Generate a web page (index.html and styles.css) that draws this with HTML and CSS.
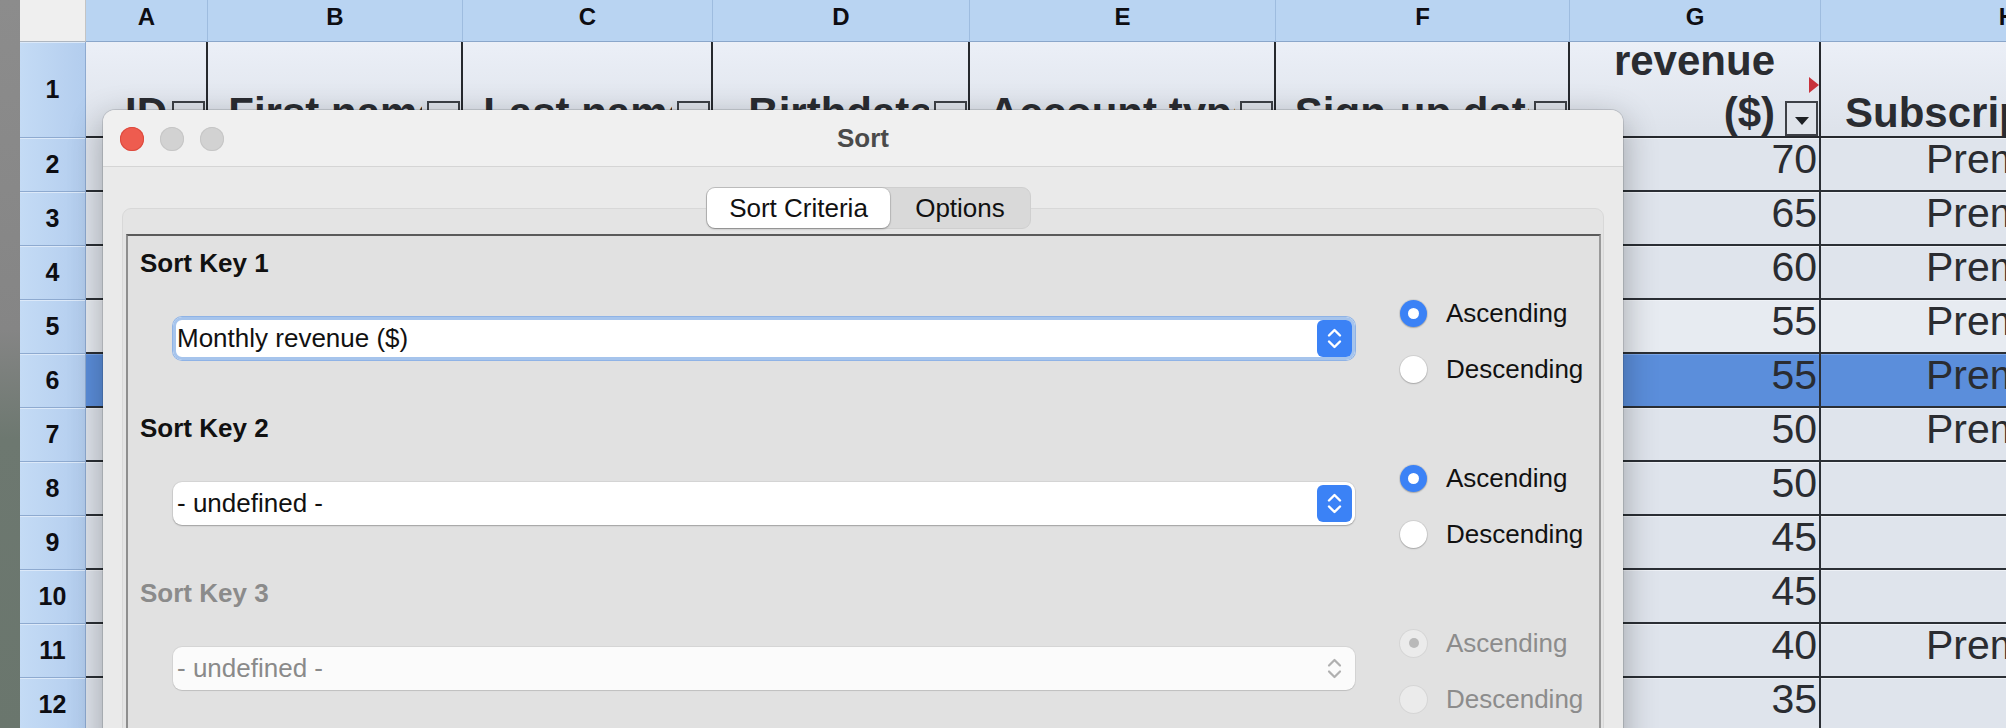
FILE: index.html
```html
<!DOCTYPE html>
<html lang="en">
<head>
<meta charset="utf-8">
<title>Sort</title>
<link rel="stylesheet" href="styles.css">
</head>
<body>
<div class="sheet">
  <div class="strip"></div>
  <div class="corner"></div>
  <div class="colh">A</div><div class="colh">B</div><div class="colh">C</div><div class="colh">D</div><div class="colh">E</div><div class="colh">F</div><div class="colh">G</div><div class="colh">H</div>

  <div class="rowh">1</div>
  <div class="hcell"><span class="ht">ID</span><span class="fbtn"></span></div>
  <div class="hcell"><span class="ht">First name</span><span class="fbtn"></span></div>
  <div class="hcell"><span class="ht">Last name</span><span class="fbtn"></span></div>
  <div class="hcell"><span class="ht">Birthdate</span><span class="fbtn"></span></div>
  <div class="hcell"><span class="ht">Account type</span><span class="fbtn"></span></div>
  <div class="hcell"><span class="ht">Sign-up date</span><span class="fbtn"></span></div>
  <div class="hcell hg"><span class="ht wrap">Monthly revenue ($)</span><span class="note"></span><span class="fbtn"></span></div>
  <div class="hcell hh"><span class="ht">Subscription</span></div>

  <div class="rowh">2</div><div class="c"></div><div class="c"></div><div class="c"></div><div class="c"></div><div class="c"></div><div class="c"></div><div class="c g">70</div><div class="c h">Premium</div>
  <div class="rowh">3</div><div class="c"></div><div class="c"></div><div class="c"></div><div class="c"></div><div class="c"></div><div class="c"></div><div class="c g">65</div><div class="c h">Premium</div>
  <div class="rowh">4</div><div class="c"></div><div class="c"></div><div class="c"></div><div class="c"></div><div class="c"></div><div class="c"></div><div class="c g">60</div><div class="c h">Premium</div>
  <div class="rowh">5</div><div class="c lt"></div><div class="c lt"></div><div class="c lt"></div><div class="c lt"></div><div class="c lt"></div><div class="c lt"></div><div class="c g lt">55</div><div class="c h lt">Premium</div>
  <div class="rowh">6</div><div class="c sel"></div><div class="c sel"></div><div class="c sel"></div><div class="c sel"></div><div class="c sel"></div><div class="c sel"></div><div class="c g sel">55</div><div class="c h sel">Premium</div>
  <div class="rowh">7</div><div class="c"></div><div class="c"></div><div class="c"></div><div class="c"></div><div class="c"></div><div class="c"></div><div class="c g">50</div><div class="c h">Premium</div>
  <div class="rowh">8</div><div class="c"></div><div class="c"></div><div class="c"></div><div class="c"></div><div class="c"></div><div class="c"></div><div class="c g">50</div><div class="c h"></div>
  <div class="rowh">9</div><div class="c"></div><div class="c"></div><div class="c"></div><div class="c"></div><div class="c"></div><div class="c"></div><div class="c g">45</div><div class="c h"></div>
  <div class="rowh">10</div><div class="c"></div><div class="c"></div><div class="c"></div><div class="c"></div><div class="c"></div><div class="c"></div><div class="c g">45</div><div class="c h"></div>
  <div class="rowh">11</div><div class="c"></div><div class="c"></div><div class="c"></div><div class="c"></div><div class="c"></div><div class="c"></div><div class="c g">40</div><div class="c h">Premium</div>
  <div class="rowh">12</div><div class="c"></div><div class="c"></div><div class="c"></div><div class="c"></div><div class="c"></div><div class="c"></div><div class="c g">35</div><div class="c h"></div>
</div>

<div class="dialog">
  <div class="titlebar">
    <div class="lights"><span class="light close"></span><span class="light"></span><span class="light"></span></div>
    <div class="title">Sort</div>
    <div></div>
  </div>
  <div class="dbody">
    <div class="tabs">
      <div class="seg"><span class="tab on">Sort Criteria</span><span class="tab off">Options</span></div>
    </div>
    <div class="tabbox">
      <div class="panel">
        <section class="key">
          <div class="klabel">Sort Key 1</div>
          <div class="krow">
            <div class="select focus"><span class="stext">Monthly revenue ($)</span><span class="stepper"><svg width="35" height="37" viewBox="0 0 35 37"><path d="M12 15.5 L17.5 10 L23 15.5 M12 21.5 L17.5 27 L23 21.5" fill="none" stroke="#fff" stroke-width="2.4" stroke-linecap="round" stroke-linejoin="round"/></svg></span></div>
            <div class="radios">
              <div class="radio"><span class="dot on"></span>Ascending</div>
              <div class="radio"><span class="dot"></span>Descending</div>
            </div>
          </div>
        </section>
        <section class="key">
          <div class="klabel">Sort Key 2</div>
          <div class="krow">
            <div class="select"><span class="stext">- undefined -</span><span class="stepper"><svg width="35" height="37" viewBox="0 0 35 37"><path d="M12 15.5 L17.5 10 L23 15.5 M12 21.5 L17.5 27 L23 21.5" fill="none" stroke="#fff" stroke-width="2.4" stroke-linecap="round" stroke-linejoin="round"/></svg></span></div>
            <div class="radios">
              <div class="radio"><span class="dot on"></span>Ascending</div>
              <div class="radio"><span class="dot"></span>Descending</div>
            </div>
          </div>
        </section>
        <section class="key dis">
          <div class="klabel">Sort Key 3</div>
          <div class="krow">
            <div class="select"><span class="stext">- undefined -</span><span class="stepper"><svg width="35" height="37" viewBox="0 0 35 37"><path d="M12 15.5 L17.5 10 L23 15.5 M12 21.5 L17.5 27 L23 21.5" fill="none" stroke="#b0b0b0" stroke-width="2.2" stroke-linecap="round" stroke-linejoin="round"/></svg></span></div>
            <div class="radios">
              <div class="radio"><span class="dot on"></span>Ascending</div>
              <div class="radio"><span class="dot"></span>Descending</div>
            </div>
          </div>
        </section>
      </div>
    </div>
  </div>
</div>
</body>
</html>
```
FILE: styles.css
```css
* { box-sizing: border-box; }
html, body { margin: 0; padding: 0; }
body {
  width: 2006px;
  height: 728px;
  overflow: hidden;
  position: relative;
  background: #dfe4ec;
  font-family: "Liberation Sans", Arial, sans-serif;
  color: #111;
}

/* ---------- spreadsheet ---------- */
.sheet {
  display: grid;
  grid-template-columns: 20px 66px 122px 255px 250px 257px 306px 294px 251px 374px;
  grid-template-rows: 42px 96px repeat(11, 54px);
}
.strip {
  grid-row: 1 / span 13;
  grid-column: 1;
  background: linear-gradient(#8c8c8c 0%, #858585 45%, #6d7870 60%, #6a766d 100%);
}
.corner {
  background: #efefef;
  border-right: 1px solid #c4c4c4;
  border-bottom: 1px solid #aeb6c0;
}
.colh {
  background: #b9d4f2;
  border-right: 1px solid #9ebcdf;
  border-bottom: 1px solid #8aa6ca;
  font-weight: bold;
  font-size: 24px;
  line-height: 34px;
  text-align: center;
  color: #0d0d12;
}
.rowh {
  background: linear-gradient(90deg, #c4dbf5, #b3cdee);
  border-bottom: 1px solid #8eaad0;
  border-right: 1px solid #8eaad0;
  box-shadow: inset 0 1px 0 #dce9f9;
  font-weight: bold;
  font-size: 25px;
  color: #0d0d12;
  display: flex;
  align-items: center;
  justify-content: center;
}

.hcell {
  position: relative;
  overflow: hidden;
  background: linear-gradient(#ebeff7, #dde2ea);
  border-right: 2px solid #26292e;
  border-bottom: 2px solid #26292e;
  font-weight: bold;
  font-size: 42px;
  line-height: 52px;
  color: #2a2c31;
  display: flex;
  align-items: flex-end;
  justify-content: center;
  white-space: nowrap;
}
.ht { margin-bottom: -3px; }
.hg { justify-content: flex-end; }
.ht.wrap {
  white-space: normal;
  width: 175px;
  text-align: right;
  margin-right: 44px;
}
.hh { justify-content: flex-start; padding-left: 24px; border-right: 0; }
.fbtn {
  position: absolute;
  right: 1px;
  bottom: 0;
  width: 33px;
  height: 35px;
  border: 2px solid #3d4046;
  background: #dfe3ea;
  box-shadow: -5px 0 0 0 #dee3eb;
}
.fbtn::after {
  content: "";
  position: absolute;
  left: 8px;
  top: 14px;
  border-left: 7px solid transparent;
  border-right: 7px solid transparent;
  border-top: 8px solid #1d1f23;
}
.note {
  position: absolute;
  right: 0;
  top: 35px;
  border-left: 10px solid #c8323c;
  border-top: 8px solid transparent;
  border-bottom: 8px solid transparent;
}

.c {
  background: #dfe4ec;
  border-bottom: 2px solid #2b2f35;
  box-shadow: inset 0 1px 0 #eef1f6;
  font-size: 41px;
  line-height: 42px;
  color: #2a2c31;
  white-space: nowrap;
  overflow: hidden;
}
.c.lt { background: #e7ebf1; }
.c.sel { background: #5b8edb; box-shadow: inset 0 1px 0 #7ba6e8; }
.g {
  text-align: right;
  padding-right: 2px;
  border-right: 2px solid #2b2f35;
}
.h { text-align: center; }

/* ---------- dialog ---------- */
.dialog {
  position: absolute;
  left: 103px;
  top: 110px;
  width: 1520px;
  height: 700px;
  background: #eaeaea;
  border-radius: 12px 12px 0 0;
  box-shadow: 0 0 0 1px rgba(0, 0, 0, 0.12), 0 10px 34px rgba(0, 0, 0, 0.3);
  overflow: hidden;
}
.titlebar {
  height: 57px;
  display: grid;
  grid-template-columns: 1fr auto 1fr;
  align-items: center;
  background: #f0f0f0;
  border-bottom: 1px solid #d5d5d5;
}
.lights {
  display: flex;
  gap: 16px;
  padding-left: 17px;
  padding-top: 2px;
}
.light {
  width: 24px;
  height: 24px;
  border-radius: 50%;
  background: #d2d2d2;
  box-shadow: inset 0 0 0 1px #c6c6c6;
}
.light.close { background: #ee5c4f; box-shadow: inset 0 0 0 1px #dc4a3e; }
.title {
  font-weight: bold;
  font-size: 26px;
  color: #4a4a4a;
}

.dbody { padding: 20px 19px 0; }
.tabs {
  display: flex;
  justify-content: center;
  padding-left: 11px;
  position: relative;
  z-index: 1;
}
.seg {
  display: flex;
  height: 42px;
  background: #d9d9d9;
  border: 1px solid #cfcfcf;
  border-radius: 9px;
  font-size: 26px;
}
.tab {
  line-height: 40px;
  text-align: center;
  color: #111;
}
.tab.on {
  width: 183px;
  background: #fff;
  border-radius: 8px;
  box-shadow: 0 1px 2px rgba(0, 0, 0, 0.3), 0 0 0 1px rgba(0, 0, 0, 0.08);
}
.tab.off { width: 140px; }

.tabbox {
  margin-top: -21px;
  background: #e4e4e4;
  border: 1px solid #d8d8d8;
  border-radius: 9px;
  padding: 25px 2px 0 3px;
}
.panel {
  background: #e1e1e1;
  border-style: solid;
  border-width: 2px;
  border-color: #5a5a5a #9a9a9a #9a9a9a #8e8e8e;
  padding: 12px 12px 0 12px;
  height: 560px;
}
.klabel {
  font-weight: bold;
  font-size: 26px;
  line-height: 30px;
  height: 30px;
  margin-bottom: 7px;
  color: #111;
}
.krow {
  display: flex;
  align-items: center;
  height: 112px;
  margin-bottom: 16px;
}
.select {
  margin-left: 33px;
  width: 1182px;
  height: 43px;
  margin-bottom: 5px;
  background: #fff;
  border-radius: 9px;
  display: flex;
  align-items: center;
  justify-content: space-between;
  padding: 0 3px 0 4px;
  font-size: 26px;
  color: #111;
  box-shadow: 0 1px 1.5px rgba(0, 0, 0, 0.25), 0 0 0 1px rgba(0, 0, 0, 0.05);
}
.select.focus {
  box-shadow: inset 0 0 0 3px #a6c4ec, 0 0 0 1px #8fb3e6;
}
.stepper {
  width: 35px;
  height: 37px;
  border-radius: 6px;
  background: #3b82f6;
  display: flex;
}
.radios {
  margin-left: 45px;
  display: flex;
  flex-direction: column;
}
.radio {
  display: flex;
  align-items: center;
  gap: 19px;
  height: 56px;
  font-size: 26px;
  color: #111;
}
.dot {
  width: 27px;
  height: 27px;
  border-radius: 50%;
  background: #fff;
  box-shadow: 0 0 0 1px rgba(0, 0, 0, 0.07), 0 1px 1.5px rgba(0, 0, 0, 0.2);
  display: flex;
  align-items: center;
  justify-content: center;
}
.dot.on { background: #3b82f6; }
.dot.on::after {
  content: "";
  width: 11px;
  height: 11px;
  border-radius: 50%;
  background: #fff;
}

.key.dis .klabel { color: #8b8b8b; }
.key.dis .select { color: #8a8a8a; background: #fbfbfb; box-shadow: 0 0 0 1px rgba(0, 0, 0, 0.05), 0 1px 1px rgba(0, 0, 0, 0.1); }
.key.dis .stepper { background: transparent; }
.key.dis .radio { color: #8c8c8c; }
.key.dis .dot { background: #ebebeb; box-shadow: 0 0 0 1px rgba(0, 0, 0, 0.05); }
.key.dis .dot.on::after { background: #b9b9b9; width: 10px; height: 10px; }
```
